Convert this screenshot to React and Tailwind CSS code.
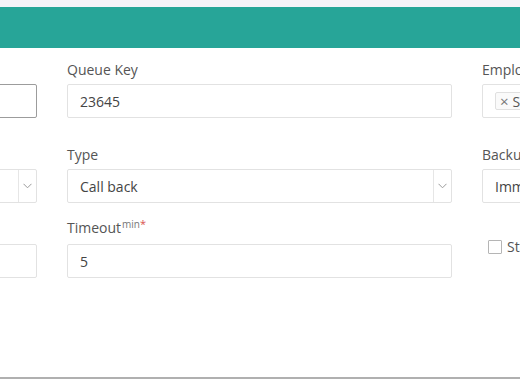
const Chevron = () => (
  <svg width="9" height="6" viewBox="0 0 9 6" fill="none">
    <path d="M0.5 0.8L4.5 4.8L8.5 0.8" stroke="#9a9a9a" strokeWidth="1" />
  </svg>
);

const Label = ({ children }) => (
  <div className="h-5 leading-5 text-[14px] text-[#555] whitespace-nowrap">{children}</div>
);

const Box = ({ children, dark }) => (
  <div
    className={`mt-1 h-[34px] rounded-[2px] border bg-white pl-3 flex items-center text-[14px] text-[#444] whitespace-nowrap overflow-hidden ${
      dark ? "border-[#9c9c9c]" : "border-[#e2e2e2]"
    }`}
  >
    {children}
  </div>
);

const Select = ({ value }) => (
  <div className="mt-1 h-[34px] rounded-[2px] border border-[#e2e2e2] bg-white flex items-stretch text-[14px] text-[#444]">
    <div className="flex-1 pl-3 flex items-center whitespace-nowrap overflow-hidden">{value}</div>
    <div className="w-[18px] border-l border-[#e6e6e6] flex items-center justify-center">
      <Chevron />
    </div>
  </div>
);

const Row = ({ children, className }) => (
  <div className={`grid grid-cols-[385px_385px_385px] gap-x-[30px] ml-[-348px] ${className}`}>
    {children}
  </div>
);

export default function App() {
  return (
    <div
      className="w-[520px] h-[379px] overflow-hidden bg-white flex flex-col"
      style={{ fontFamily: '"Open Sans", "Noto Sans", sans-serif' }}
    >
      <div className="h-[7px] bg-[#f5f3f8]" />
      <div className="h-[41px] bg-[#27a598]" />

      <div className="flex-1">
        {/* row 1 */}
        <Row className="mt-3">
          <div>
            <div className="h-5" />
            <Box dark />
          </div>
          <div>
            <Label>Queue Key</Label>
            <Box>23645</Box>
          </div>
          <div>
            <Label>Employees</Label>
            <Box>
              <span className="h-[18px] flex items-center gap-[4px] border border-[#e0e0e0] bg-[#fafafa] rounded-[2px] px-1 text-[14px] text-[#555]">
                <span className="text-[#777] text-[15px] leading-none">×</span>
                <span>Sarah Miller</span>
              </span>
            </Box>
          </div>
        </Row>

        {/* row 2 */}
        <Row className="mt-[27px]">
          <div>
            <div className="h-5" />
            <Select value="" />
          </div>
          <div>
            <Label>Type</Label>
            <Select value="Call back" />
          </div>
          <div>
            <Label>Backup Queue</Label>
            <Box>Immediately</Box>
          </div>
        </Row>

        {/* row 3 */}
        <Row className="mt-[15px]">
          <div>
            <div className="h-5" />
            <div className="mt-[6px] h-[34px] rounded-[2px] border border-[#e2e2e2]" />
          </div>
          <div>
            <div className="h-5 leading-5 text-[14px] text-[#555] whitespace-nowrap">
              Timeout
              <sup className="text-[10px] text-[#777] ml-[1px]">min</sup>
              <sup className="text-[11px] text-[#d9534f]">*</sup>
            </div>
            <div className="mt-[6px] h-[34px] rounded-[2px] border border-[#e2e2e2] bg-white pl-3 flex items-center text-[14px] text-[#444]">
              5
            </div>
          </div>
          <div className="pt-[21px] pl-[6px] flex items-start gap-[5px]">
            <span className="mt-[1px] w-[14px] h-[14px] border border-[#b5b5b5] rounded-[1px] bg-white shrink-0" />
            <span className="leading-4 text-[14px] text-[#555] whitespace-nowrap">Stay in queue</span>
          </div>
        </Row>
      </div>

      <div className="h-[2px] bg-[#b0b0b0]" />
    </div>
  );
}
